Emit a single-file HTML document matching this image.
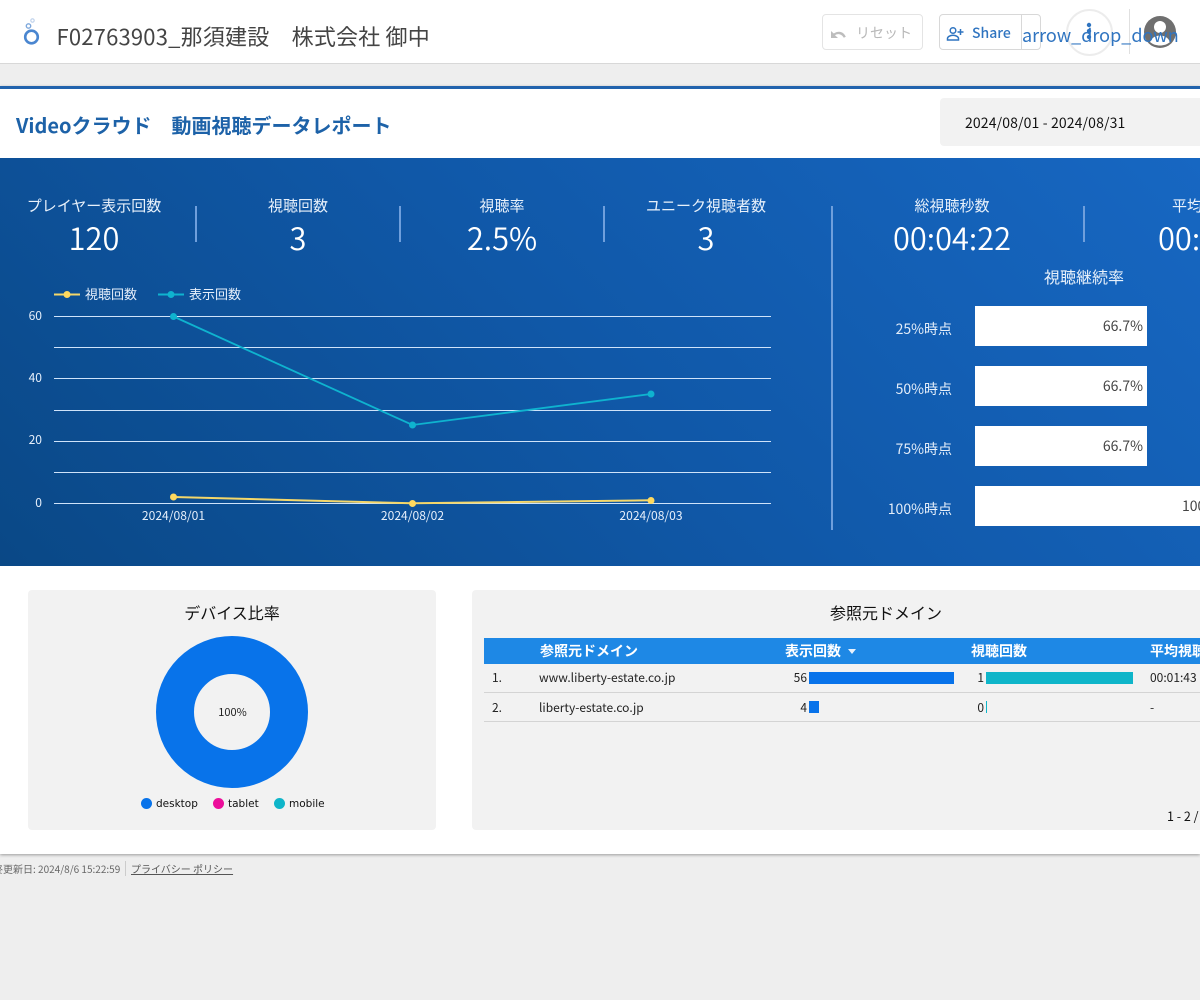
<!DOCTYPE html>
<html lang="ja"><head><meta charset="utf-8"><title>Videoクラウド 動画視聴データレポート</title>
<style>
html,body{margin:0;padding:0;width:1200px;height:1000px;overflow:hidden;background:#eee}
body{position:relative;font-family:"Noto Sans CJK JP","Liberation Sans",sans-serif;color:#000}
.a{position:absolute;white-space:nowrap;line-height:1}
.c{transform:translateX(-50%)}
.r{transform:translateX(-100%)}
.lab{color:#e8f1fb;font-size:15px;font-weight:400}
.num{color:#fff;font-size:30.800px;font-weight:350}
.sep{position:absolute;width:2px;background:#6f9fdc}
.ax{color:#e6effb;font-size:12.100px;font-weight:400}
.wb{position:absolute;left:975px;background:#fff;height:40px;color:#444;font-size:14px;overflow:hidden}
.pl{color:#e3edf9;font-size:14px;font-weight:400}
.tb{font-size:12px;color:#222;font-weight:400}
.th{font-size:14px;color:#fff;font-weight:700}
.clip{overflow:hidden}
</style></head><body>
<!-- top bar -->
<div style="position:absolute;left:0;top:0;width:1200px;height:63px;background:#fff;border-bottom:1px solid #d8d8d8"></div>
<svg style="position:absolute;left:20px;top:14px" width="26" height="34" viewBox="0 0 26 34">
<circle cx="11.500" cy="23" r="6.300" fill="none" stroke="#4a86d0" stroke-width="2.600"/>
<circle cx="8.500" cy="12" r="2.200" fill="none" stroke="#7ea8dc" stroke-width="1.400"/>
<circle cx="12.500" cy="6.500" r="1.700" fill="none" stroke="#bcd0ea" stroke-width="1.100"/>
</svg>
<div class="a" style="left:56.500px;top:25px;font-size:22px;color:#444;letter-spacing:.2px">F02763903_那須建設　株式会社 御中</div>

<div style="position:absolute;left:822px;top:14px;width:99px;height:34px;border:1px solid #e4e4e4;border-radius:4px"></div>
<svg style="position:absolute;left:829px;top:26px" width="20" height="16" viewBox="0 0 20 16"><path d="M2 5v7h7l-3-2.800c2.600-1.900 6.600-1.300 8.800 2.600l2-1C14.600 5.500 9.500 4.400 4.800 7.500z" fill="#bdbdbd"/></svg>
<div class="a" style="left:856px;top:26px;font-size:14px;color:#b8b8b8">リセット</div>

<div style="position:absolute;left:939px;top:14px;width:100px;height:34px;border:1px solid #d8d8d8;border-radius:4px"></div>
<div style="position:absolute;left:1021px;top:14px;width:1px;height:36px;background:#d8d8d8"></div>
<svg style="position:absolute;left:946px;top:26px" width="18" height="16" viewBox="0 0 18 16"><circle cx="7" cy="4.500" r="2.800" fill="none" stroke="#2f74c0" stroke-width="1.500"/><path d="M1.500 14v-1.500c0-2 3-3.200 5.500-3.200s5.500 1.200 5.500 3.200V14z" fill="none" stroke="#2f74c0" stroke-width="1.500"/><path d="M14.500 3v6M11.500 6h6" stroke="#2f74c0" stroke-width="1.500"/></svg>
<div class="a" style="left:972px;top:26px;font-size:14px;font-weight:500;color:#2f74c0">Share</div>
<div style="position:absolute;left:1066px;top:9px;width:47px;height:47px;border:2px solid #ececec;border-radius:50%;box-sizing:border-box"></div>
<div style="position:absolute;left:1129px;top:9px;width:1px;height:45px;background:#e0e0e0"></div>
<svg style="position:absolute;left:1144px;top:16px" width="32" height="32" viewBox="0 0 32 32"><circle cx="16" cy="16" r="16" fill="#6f6f6f"/><circle cx="16" cy="11" r="6" fill="#fff"/><path d="M6 26c2-5 6.500-6.500 10-6.500s8 1.500 10 6.500c-3 2.500-6.500 3.500-10 3.500S9 28.500 6 26z" fill="#fff"/></svg>
<svg style="position:absolute;left:1084px;top:22px" width="10" height="20" viewBox="0 0 10 20"><circle cx="5" cy="3" r="2.200" fill="#2f74c0"/><circle cx="5" cy="9" r="2.200" fill="#2f74c0"/><circle cx="5" cy="15" r="2.200" fill="#2f74c0"/></svg>
<div class="a" style="left:1022px;top:26px;font-size:18px;color:#2f74c0">arrow_drop_down</div>

<!-- canvas -->
<div style="position:absolute;left:0;top:86px;width:1200px;height:768px;background:#fff;box-shadow:0 1px 3px rgba(0,0,0,.35)"></div>
<div style="position:absolute;left:0;top:86px;width:1200px;height:2.500px;background:#2263ad"></div>
<div class="a" style="left:16px;top:115px;font-size:20px;font-weight:700;color:#1d62a8">Videoクラウド　動画視聴データレポート</div>
<div style="position:absolute;left:940px;top:98px;width:260px;height:48px;background:#f2f2f2;border-radius:4px 0 0 4px"></div>
<div class="a" style="left:965px;top:116px;font-size:14px;color:#111;letter-spacing:.13px">2024/08/01 - 2024/08/31</div>

<!-- banner -->
<div style="position:absolute;left:0;top:158px;width:1200px;height:408px;background:linear-gradient(225deg,#1767c2 0%,#1058a8 50%,#0a4886 100%)"></div>

<div class="a lab c" style="left:94px;top:198px">プレイヤー表示回数</div>
<div class="a num c" style="left:94px;top:222px">120</div>
<div class="sep" style="left:195px;top:206px;height:36px"></div>
<div class="a lab c" style="left:298px;top:198px">視聴回数</div>
<div class="a num c" style="left:298px;top:222px">3</div>
<div class="sep" style="left:399px;top:206px;height:36px"></div>
<div class="a lab c" style="left:502px;top:198px">視聴率</div>
<div class="a num c" style="left:502px;top:222px">2.5%</div>
<div class="sep" style="left:603px;top:206px;height:36px"></div>
<div class="a lab c" style="left:706px;top:198px">ユニーク視聴者数</div>
<div class="a num c" style="left:706px;top:222px">3</div>
<div class="sep" style="left:831px;top:206px;height:324px"></div>
<div class="a lab c" style="left:952px;top:198px">総視聴秒数</div>
<div class="a num c" style="left:952px;top:222px">00:04:22</div>
<div class="sep" style="left:1083px;top:206px;height:36px"></div>
<div class="a lab clip" style="left:1172px;top:198px;width:28px">平均視聴秒数</div>
<div class="a num clip" style="left:1158px;top:222px;width:42px">00:01:27</div>

<!-- chart -->
<svg style="position:absolute;left:0;top:280px" width="800" height="250" viewBox="0 280 800 250">
<g stroke="#cfe3fa" stroke-width="1">
<path d="M54 316.500H771M54 347.500H771M54 378.500H771M54 410.500H771M54 441.500H771M54 472.500H771M54 503.500H771"/>
</g>
<path d="M173.500 316.500L412.500 425L651 394" fill="none" stroke="#0fb3cf" stroke-width="1.800"/>
<path d="M173.500 497L412.500 503.300L651 500.300" fill="none" stroke="#f4d76a" stroke-width="2"/>
<g fill="#0fb3cf"><circle cx="173.500" cy="316.500" r="3.500"/><circle cx="412.500" cy="425" r="3.500"/><circle cx="651" cy="394" r="3.500"/></g>
<g fill="#ffd95e"><circle cx="173.500" cy="497" r="3.500"/><circle cx="412.500" cy="503.500" r="3.500"/><circle cx="651" cy="500.500" r="3.500"/></g>
<path d="M54 294.500H80" stroke="#f4d76a" stroke-width="2"/><circle cx="67" cy="294.500" r="3.500" fill="#ffd95e"/>
<path d="M158 294.500H184" stroke="#0fb3cf" stroke-width="2"/><circle cx="171" cy="294.500" r="3.500" fill="#0fb3cf"/>
</svg>
<div class="a ax" style="left:85px;top:287px;font-size:13px">視聴回数</div>
<div class="a ax" style="left:189px;top:287px;font-size:13px">表示回数</div>
<div class="a ax r" style="left:42px;top:310px">60</div>
<div class="a ax r" style="left:42px;top:372px">40</div>
<div class="a ax r" style="left:42px;top:434px">20</div>
<div class="a ax r" style="left:42px;top:497px">0</div>
<div class="a ax c" style="left:173.500px;top:510px">2024/08/01</div>
<div class="a ax c" style="left:412.500px;top:510px">2024/08/02</div>
<div class="a ax c" style="left:651px;top:510px">2024/08/03</div>

<!-- retention -->
<div class="a c" style="left:1084px;top:268px;font-size:16px;color:#e8f1fb;font-weight:400">視聴継続率</div>
<div class="a pl r" style="left:952px;top:322px">25%時点</div>
<div class="a pl r" style="left:952px;top:382px">50%時点</div>
<div class="a pl r" style="left:952px;top:442px">75%時点</div>
<div class="a pl r" style="left:952px;top:502px">100%時点</div>
<div class="wb" style="top:306px;width:172px"><span class="a" style="right:4px;top:13px">66.7%</span></div>
<div class="wb" style="top:366px;width:172px"><span class="a" style="right:4px;top:13px">66.7%</span></div>
<div class="wb" style="top:426px;width:172px"><span class="a" style="right:4px;top:13px">66.7%</span></div>
<div class="wb" style="top:486px;width:225px"><span class="a" style="left:207px;top:13px">100%</span></div>

<!-- device card -->
<div style="position:absolute;left:28px;top:590px;width:408px;height:240px;background:#f2f2f2;border-radius:4px"></div>
<div class="a c" style="left:232px;top:604px;font-size:16px;color:#111">デバイス比率</div>
<svg style="position:absolute;left:150px;top:630px" width="164" height="164" viewBox="0 0 164 164"><circle cx="82" cy="82" r="57" fill="none" stroke="#0873ea" stroke-width="38"/></svg>
<div class="a c" style="left:232.500px;top:707px;font-size:11px;color:#222">100%</div>
<svg style="position:absolute;left:135px;top:793px" width="200" height="20" viewBox="0 0 200 20"><circle cx="11.500" cy="10.500" r="5.500" fill="#0873ea"/><circle cx="83.500" cy="10.500" r="5.500" fill="#ec0e9a"/><circle cx="144.500" cy="10.500" r="5.500" fill="#0fb5c9"/></svg>
<div class="a" style="left:156px;top:799px;font-size:10.500px;font-family:'DejaVu Sans',sans-serif;color:#111">desktop</div>
<div class="a" style="left:228px;top:799px;font-size:10.500px;font-family:'DejaVu Sans',sans-serif;color:#111">tablet</div>
<div class="a" style="left:289px;top:799px;font-size:10.500px;font-family:'DejaVu Sans',sans-serif;color:#111">mobile</div>

<!-- domain card -->
<div style="position:absolute;left:472px;top:590px;width:728px;height:240px;background:#f2f2f2;border-radius:4px 0 0 4px"></div>
<div class="a c" style="left:886px;top:604px;font-size:16px;color:#111">参照元ドメイン</div>
<div style="position:absolute;left:484px;top:638px;width:716px;height:26px;background:#1e88e5"></div>
<div class="a th" style="left:540px;top:644px">参照元ドメイン</div>
<div class="a th" style="left:785px;top:644px">表示回数</div>
<svg style="position:absolute;left:848px;top:649px" width="8" height="6" viewBox="0 0 8 6"><path d="M0 0h8L4 5z" fill="#e8f1fc"/></svg>
<div class="a th" style="left:971px;top:644px">視聴回数</div>
<div class="a th clip" style="left:1150px;top:644px;width:50px">平均視聴秒数</div>
<div style="position:absolute;left:484px;top:692px;width:716px;height:1px;background:#d4d4d4"></div>
<div style="position:absolute;left:484px;top:721px;width:716px;height:1px;background:#d4d4d4"></div>
<div class="a tb" style="left:492px;top:672px">1.</div>
<div class="a tb" style="left:539px;top:672px">www.liberty-estate.co.jp</div>
<div class="a tb r" style="left:807px;top:672px">56</div>
<div style="position:absolute;left:809px;top:672px;width:145px;height:12px;background:#0873ea"></div>
<div class="a tb r" style="left:984px;top:672px">1</div>
<div style="position:absolute;left:986px;top:672px;width:147px;height:12px;background:#0fb5c9"></div>
<div class="a tb" style="left:1150px;top:672px">00:01:43</div>
<div class="a tb" style="left:492px;top:702px">2.</div>
<div class="a tb" style="left:539px;top:702px">liberty-estate.co.jp</div>
<div class="a tb r" style="left:807px;top:702px">4</div>
<div style="position:absolute;left:809px;top:701px;width:10px;height:12px;background:#0873ea"></div>
<div class="a tb r" style="left:984px;top:702px">0</div>
<div style="position:absolute;left:986px;top:701px;width:1px;height:12px;background:#0fb5c9"></div>
<div class="a tb" style="left:1150px;top:702px">-</div>
<div class="a clip" style="left:1167px;top:810px;width:33px;font-size:12.500px;color:#111">1 - 2 / 2</div>

<!-- footer -->
<div class="a clip" style="left:0;top:864px;width:121px;height:12px;font-size:10px;color:#666"><span style="display:block;margin-left:-17px">最終更新日: 2024/8/6 15:22:59</span></div>
<div style="position:absolute;left:125px;top:861px;width:1px;height:15px;background:#ccc"></div>
<div class="a" style="left:131px;top:864px;font-size:10px;color:#555;text-decoration:underline">プライバシー ポリシー</div>
</body></html>
